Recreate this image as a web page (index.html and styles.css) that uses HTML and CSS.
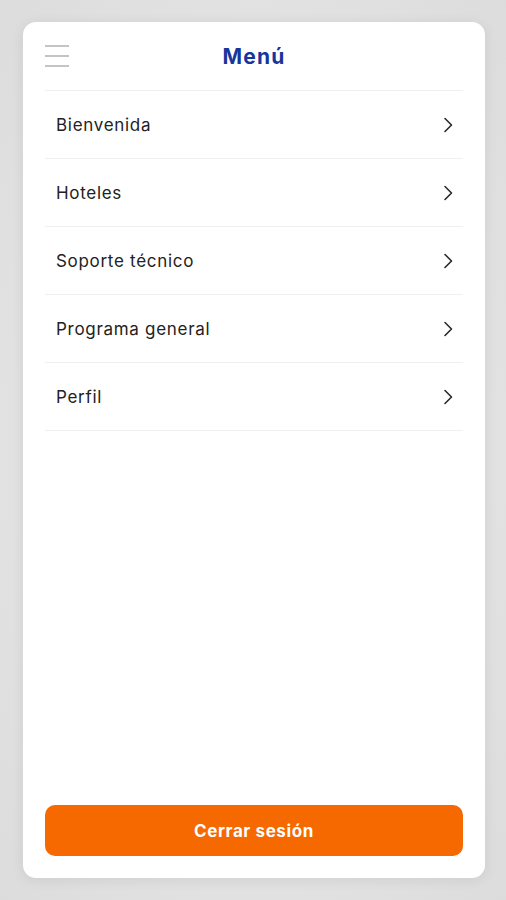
FILE: index.html
```html
<!DOCTYPE html>
<html lang="es">

<head>
    <meta charset="UTF-8">
    <meta name="viewport" content="width=device-width, initial-scale=1.0">
    <title>Menú</title>
    <link rel="stylesheet" href="styles.css">
</head>

<body>
    <div class="card">
        <div class="header">
            <div class="burger">
                <span></span>
                <span></span>
                <span></span>
            </div>
            <h1 class="title">Menú</h1>
        </div>
        <ul class="menu">
            <li class="item">Bienvenida
                <svg class="chevron" viewBox="0 0 10 16"><path d="M2 1.5 L8.5 8 L2 14.5" /></svg>
            </li>
            <li class="item">Hoteles
                <svg class="chevron" viewBox="0 0 10 16"><path d="M2 1.5 L8.5 8 L2 14.5" /></svg>
            </li>
            <li class="item">Soporte técnico
                <svg class="chevron" viewBox="0 0 10 16"><path d="M2 1.5 L8.5 8 L2 14.5" /></svg>
            </li>
            <li class="item">Programa general
                <svg class="chevron" viewBox="0 0 10 16"><path d="M2 1.5 L8.5 8 L2 14.5" /></svg>
            </li>
            <li class="item">Perfil
                <svg class="chevron" viewBox="0 0 10 16"><path d="M2 1.5 L8.5 8 L2 14.5" /></svg>
            </li>
        </ul>
        <button class="logout">Cerrar sesión</button>
    </div>
</body>

</html>
```

FILE: styles.css
```css
/* reset start */
* {
    padding: 0;
    margin: 0;
    box-sizing: border-box;
}

html,
body {
    width: 100%;
    height: 100%;
}

body {
    overflow: hidden;
    background: radial-gradient(ellipse at center, #ececec 0%, #e3e3e3 60%, #dcdcdc 100%);
    font-family: Inter, "Noto Sans", sans-serif;
    padding: 22px 21px 22px 23px;
}

li {
    list-style: none;
}

/* reset end */
.card {
    height: 856px;
    background-color: #fff;
    border-radius: 13px;
    box-shadow: 0 2px 14px rgba(0, 0, 0, .08);
    padding: 0 22px 22px;
    display: flex;
    flex-direction: column;
}

.header {
    height: 69px;
    display: flex;
    align-items: center;
    justify-content: center;
    position: relative;
    border-bottom: 1px solid #f0f0f0;
}

.burger {
    position: absolute;
    left: 0;
    top: 23px;
    width: 24px;
    display: flex;
    flex-direction: column;
    gap: 8px;
}

.burger span {
    display: block;
    height: 2px;
    background-color: #c4c4c4;
}

.title {
    font-size: 21px;
    font-weight: 700;
    color: #17369b;
    letter-spacing: 1.2px;
}

.menu {
    flex: 1;
}

.item {
    height: 68px;
    display: flex;
    align-items: center;
    justify-content: space-between;
    padding: 0 10px 0 11px;
    border-bottom: 1px solid #f0f0f0;
    font-size: 17px;
    color: #222;
    letter-spacing: .7px;
}

.chevron {
    width: 10px;
    height: 16px;
    fill: none;
    stroke: #2a2a2a;
    stroke-width: 1.6;
    stroke-linecap: round;
    stroke-linejoin: round;
}

.logout {
    height: 51px;
    border: none;
    border-radius: 10px;
    background-color: #f66900;
    color: #fff;
    font-family: Inter, "Noto Sans", sans-serif;
    font-size: 17px;
    font-weight: 700;
    letter-spacing: .6px;
}
```
